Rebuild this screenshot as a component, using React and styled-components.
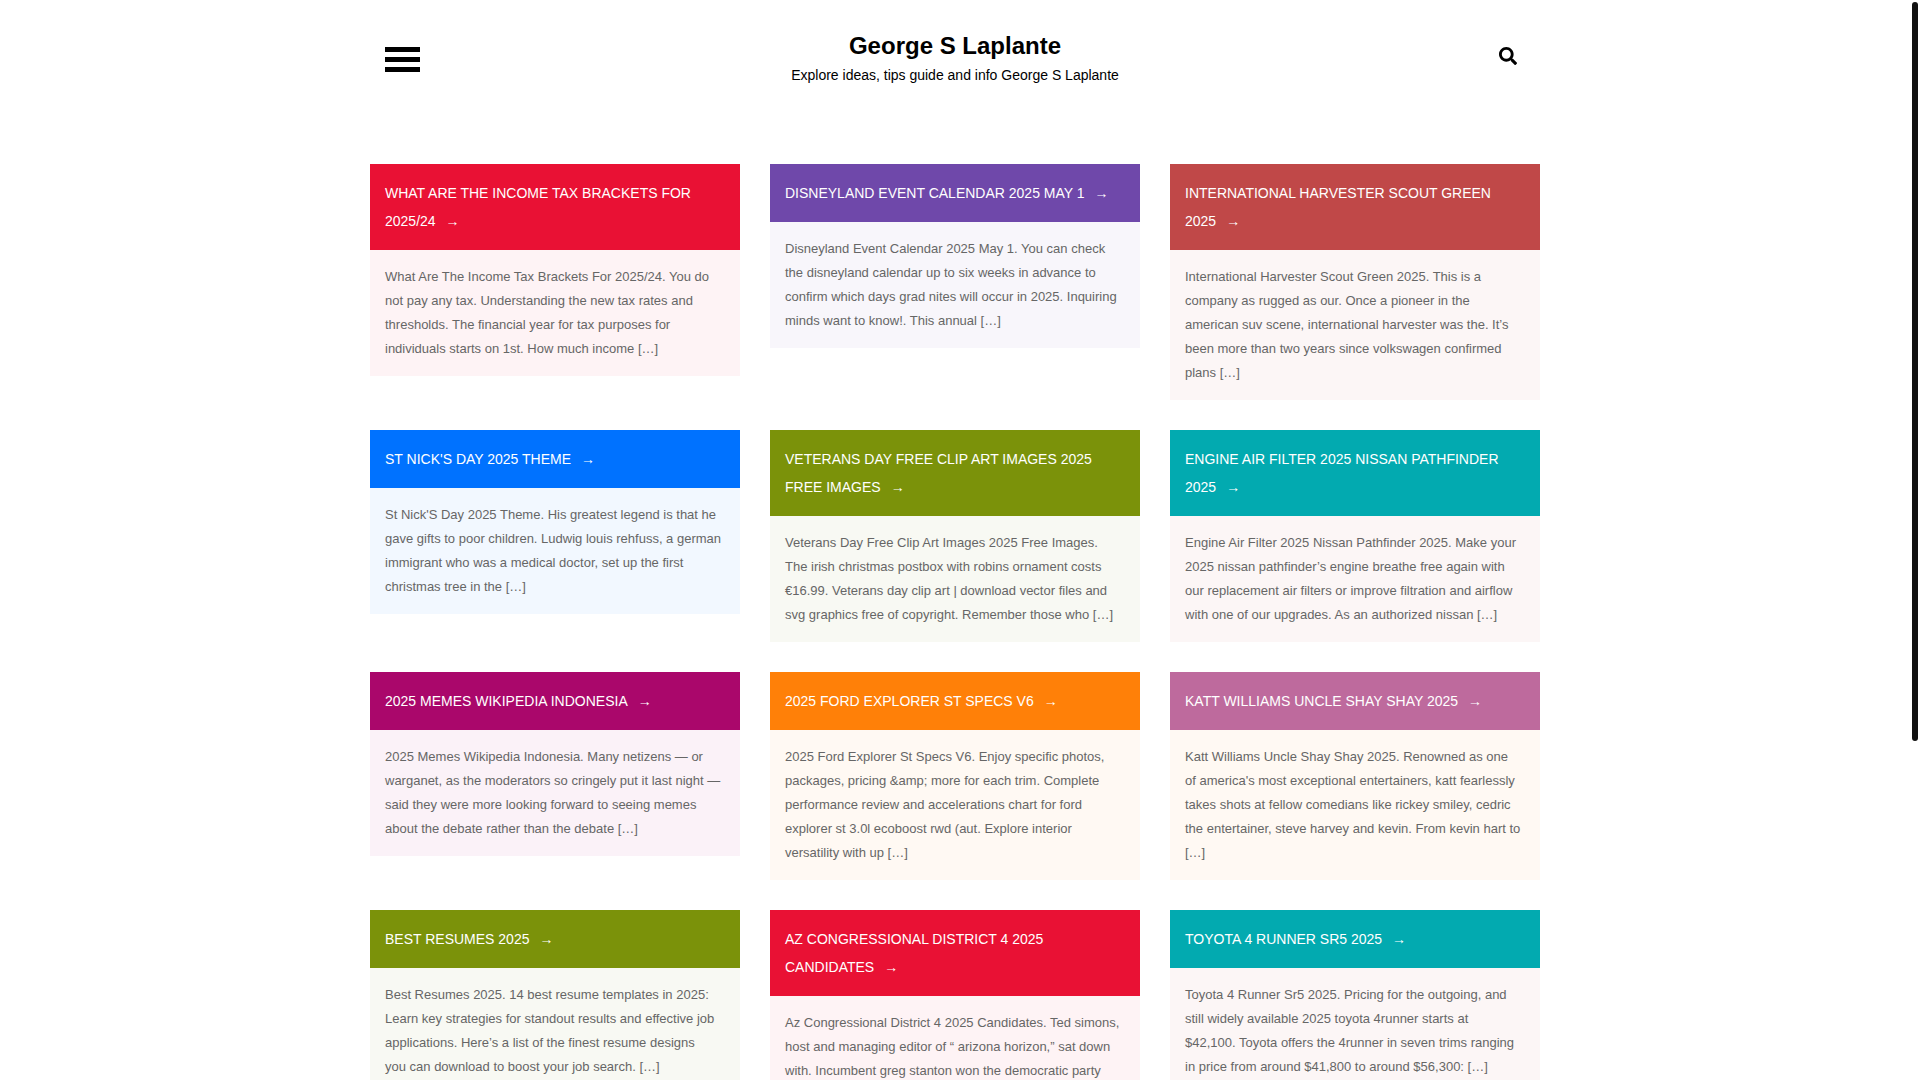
import React from 'react';
import styled, { createGlobalStyle } from 'styled-components';
import { FaSearch } from 'react-icons/fa';

const GlobalStyle = createGlobalStyle`
  * {
    box-sizing: border-box;
  }

  body {
    margin: 0;
    background-color: #fff;
    color: #666;
    font-family: 'Liberation Sans', Arial, sans-serif;
    font-size: 13px;
    line-height: 24px;
  }
`;

const Page = styled.div`
  height: 100vh;
  overflow: hidden;
  padding: 0 10px 0 0;
`;

const Container = styled.div`
  max-width: 1170px;
  margin: 0 auto;
`;

const Header = styled.header`
  display: grid;
  grid-template-columns: 1fr auto 1fr;
  align-items: start;
  padding: 30px 15px 76px;
`;

const MenuButton = styled.button`
  display: flex;
  flex-direction: column;
  gap: 5px;
  width: 35px;
  margin-top: 17px;
  padding: 0;
  border: none;
  background: none;
  cursor: pointer;
`;

const MenuBar = styled.span`
  width: 100%;
  height: 5px;
  background-color: #000;
`;

const Branding = styled.div`
  color: #000;
  text-align: center;
`;

const SiteTitle = styled.h1`
  margin: 0;
  font-size: 24px;
  font-weight: 700;
  line-height: 32px;

  a {
    color: inherit;
    text-decoration: none;
  }
`;

const Tagline = styled.p`
  margin: 0;
  font-size: 14px;
  line-height: 26px;
`;

const SearchButton = styled.button`
  display: flex;
  justify-self: end;
  margin-top: 17px;
  padding: 0 8px;
  border: none;
  background: none;
  color: #000;
  font-size: 18px;
  cursor: pointer;
`;

const PostGrid = styled.main`
  display: grid;
  grid-template-columns: repeat(auto-fill, minmax(340px, 1fr));
  align-items: start;
  gap: 30px;
`;

const Card = styled.article`
  background-color: ${({ $tint }) => $tint};
`;

const CardTitle = styled.h2`
  margin: 0;
  padding: 15px;
  background-color: ${({ $color }) => $color};
  font-size: 14px;
  font-weight: 400;
  line-height: 28px;
  text-transform: uppercase;

  a {
    color: #fff;
    text-decoration: none;
  }

  a::after {
    content: '→';
    margin-left: 10px;
  }
`;

const Excerpt = styled.p`
  margin: 0;
  padding: 15px;
  white-space: pre-line;
`;

const ScrollThumb = styled.div`
  position: fixed;
  top: 2px;
  right: 2px;
  width: 6px;
  height: 739px;
  border-radius: 4px;
  background-color: #111;
`;

const posts = [
  {
    title: 'What Are The Income Tax Brackets For 2025/24',
    color: '#e91134',
    tint: '#fef3f5',
    excerpt:
      'What Are The Income Tax Brackets For 2025/24. You do not pay any tax. Understanding the new tax rates and thresholds. The financial year for tax purposes for individuals starts on 1st. How much income […]',
  },
  {
    title: 'Disneyland Event Calendar 2025 May 1',
    color: '#6f48aa',
    tint: '#f8f6fb',
    excerpt:
      'Disneyland Event Calendar 2025 May 1. You can check the disneyland calendar up to six weeks in advance to confirm which days grad nites will occur in 2025. Inquiring minds want to know!. This annual […]',
  },
  {
    title: 'International Harvester Scout Green 2025',
    color: '#c04848',
    tint: '#fcf6f6',
    excerpt:
      'International Harvester Scout Green 2025. This is a company as rugged as our. Once a pioneer in the american suv scene, international harvester was the. It’s been more than two years since volkswagen confirmed plans […]',
  },
  {
    title: "St Nick'S Day 2025 Theme",
    color: '#0072ff',
    tint: '#f2f8ff',
    excerpt:
      "St Nick'S Day 2025 Theme. His greatest legend is that he gave gifts to poor children. Ludwig louis rehfuss, a german immigrant who was a medical doctor, set up the first christmas tree in the […]",
  },
  {
    title: 'Veterans Day Free Clip Art Images 2025 Free Images',
    color: '#7b920a',
    tint: '#f8f9f3',
    excerpt:
      'Veterans Day Free Clip Art Images 2025 Free Images.\nThe irish christmas postbox with robins ornament costs\n€16.99. Veterans day clip art | download vector files and\nsvg graphics free of copyright. Remember those who […]',
  },
  {
    title: 'Engine Air Filter 2025 Nissan Pathfinder 2025',
    color: '#02aab0',
    tint: '#fcf6f6',
    excerpt:
      'Engine Air Filter 2025 Nissan Pathfinder 2025. Make your 2025 nissan pathfinder’s engine breathe free again with our replacement air filters or improve filtration and airflow with one of our upgrades. As an authorized nissan […]',
  },
  {
    title: '2025 Memes Wikipedia Indonesia',
    color: '#aa076b',
    tint: '#fbf2f8',
    excerpt:
      '2025 Memes Wikipedia Indonesia. Many netizens — or warganet, as the moderators so cringely put it last night — said they were more looking forward to seeing memes about the debate rather than the debate […]',
  },
  {
    title: '2025 Ford Explorer St Specs V6',
    color: '#ff8008',
    tint: '#fff9f3',
    excerpt:
      '2025 Ford Explorer St Specs V6. Enjoy specific photos, packages, pricing &amp; more for each trim. Complete performance review and accelerations chart for ford explorer st 3.0l ecoboost rwd (aut. Explore interior versatility with up […]',
  },
  {
    title: 'Katt Williams Uncle Shay Shay 2025',
    color: '#be6a9d',
    tint: '#fff9f3',
    excerpt:
      "Katt Williams Uncle Shay Shay 2025. Renowned as one\nof america's most exceptional entertainers, katt fearlessly takes shots at fellow comedians like rickey smiley, cedric the entertainer, steve harvey and kevin. From kevin hart to […]",
  },
  {
    title: 'Best Resumes 2025',
    color: '#7b920a',
    tint: '#f8f9f3',
    excerpt:
      'Best Resumes 2025. 14 best resume templates in 2025: Learn key strategies for standout results and effective job applications. Here’s a list of the finest resume designs\nyou can download to boost your job search. […]',
  },
  {
    title: 'Az Congressional District 4 2025 Candidates',
    color: '#e91134',
    tint: '#fef3f5',
    excerpt:
      'Az Congressional District 4 2025 Candidates. Ted simons, host and managing editor of “ arizona horizon,” sat down with. Incumbent greg stanton won the democratic party\n[…]',
  },
  {
    title: 'Toyota 4 Runner Sr5 2025',
    color: '#02aab0',
    tint: '#fcf6f6',
    excerpt:
      'Toyota 4 Runner Sr5 2025. Pricing for the outgoing, and still widely available 2025 toyota 4runner starts at\n$42,100. Toyota offers the 4runner in seven trims ranging\nin price from around $41,800 to around $56,300: […]',
  },
];

const App = () => {
  return (
    <>
      <GlobalStyle />
      <Page>
        <Container>
          <Header>
            <MenuButton type="button" aria-label="Menu">
              <MenuBar />
              <MenuBar />
              <MenuBar />
            </MenuButton>
            <Branding>
              <SiteTitle>
                <a href="#home">George S Laplante</a>
              </SiteTitle>
              <Tagline>Explore ideas, tips guide and info George S Laplante</Tagline>
            </Branding>
            <SearchButton type="button" aria-label="Search">
              <FaSearch />
            </SearchButton>
          </Header>
          <PostGrid>
            {posts.map((post) => (
              <Card key={post.title} $tint={post.tint}>
                <CardTitle $color={post.color}>
                  <a href="#post">{post.title}</a>
                </CardTitle>
                <Excerpt>{post.excerpt}</Excerpt>
              </Card>
            ))}
          </PostGrid>
        </Container>
      </Page>
      <ScrollThumb />
    </>
  );
};

export default App;
